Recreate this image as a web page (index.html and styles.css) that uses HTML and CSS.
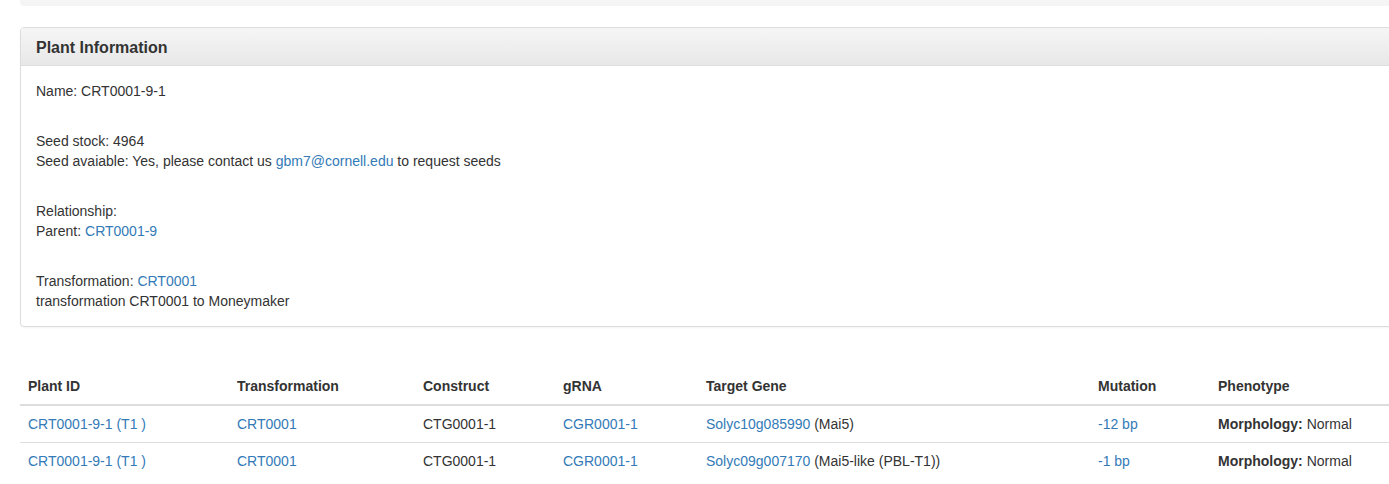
FILE: index.html
```html
<!DOCTYPE html>
<html lang="en">
  <head>
    <meta charset="UTF-8" />
    <meta name="viewport" content="width=device-width, initial-scale=1.0" />
    <title>CRT0001-9-1</title>
    <link rel="stylesheet" href="styles.css">
  </head>
  <body>
    <div class="container">
      <div class="well"></div>

      <div class="panel">
        <div class="panel-heading">
          <h3 class="panel-title">Plant Information</h3>
        </div>
        <div class="panel-body">
          <p>Name: CRT0001-9-1</p>
          <p>
            Seed stock: 4964<br />
            Seed avaiable: Yes, please contact us <a href="#">gbm7@cornell.edu</a> to request seeds
          </p>
          <p>
            Relationship:<br />
            Parent: <a href="#">CRT0001-9</a>
          </p>
          <p>
            Transformation: <a href="#">CRT0001</a><br />
            transformation CRT0001 to Moneymaker
          </p>
        </div>
      </div>

      <table class="plants">
        <colgroup>
          <col class="c-id" />
          <col class="c-trans" />
          <col class="c-construct" />
          <col class="c-grna" />
          <col class="c-gene" />
          <col class="c-mut" />
          <col class="c-pheno" />
        </colgroup>
        <thead>
          <tr>
            <th>Plant ID</th>
            <th>Transformation</th>
            <th>Construct</th>
            <th>gRNA</th>
            <th>Target Gene</th>
            <th>Mutation</th>
            <th>Phenotype</th>
          </tr>
        </thead>
        <tbody>
          <tr>
            <td><a href="#">CRT0001-9-1 (T1 )</a></td>
            <td><a href="#">CRT0001</a></td>
            <td>CTG0001-1</td>
            <td><a href="#">CGR0001-1</a></td>
            <td><a href="#">Solyc10g085990</a> (Mai5)</td>
            <td><a href="#">-12 bp</a></td>
            <td><b>Morphology:</b> Normal</td>
          </tr>
          <tr>
            <td><a href="#">CRT0001-9-1 (T1 )</a></td>
            <td><a href="#">CRT0001</a></td>
            <td>CTG0001-1</td>
            <td><a href="#">CGR0001-1</a></td>
            <td><a href="#">Solyc09g007170</a> (Mai5-like (PBL-T1))</td>
            <td><a href="#">-1 bp</a></td>
            <td><b>Morphology:</b> Normal</td>
          </tr>
        </tbody>
      </table>
    </div>
  </body>
</html>
```

FILE: styles.css
```css
html,
body {
  overflow: hidden;
}
body {
  margin: 0;
  font-family: "Liberation Sans", Arial, sans-serif;
  font-size: 14px;
  line-height: 20px;
  color: #333;
  background-color: #fff;
}
a {
  color: #337ab7;
  text-decoration: none;
}
.container {
  width: 1420px;
  padding-left: 20px;
}
.well {
  height: 6px;
  background-color: #f5f5f5;
  border-radius: 0 0 0 4px;
  margin-bottom: 21px;
}
.panel {
  border: 1px solid #ddd;
  border-radius: 4px;
  box-shadow: 0 1px 2px rgba(0, 0, 0, 0.05);
  margin-bottom: 41px;
}
.panel-heading {
  padding: 11px 15px 9px;
  border-bottom: 1px solid #ddd;
  border-radius: 3px 3px 0 0;
  background-image: linear-gradient(to bottom, #f5f5f5 0%, #e8e8e8 100%);
}
.panel-title {
  margin: 0;
  font-size: 16px;
  line-height: 17px;
  font-weight: bold;
}
.panel-body {
  padding: 15px;
}
.panel-body p {
  margin: 0 0 30px;
}
.panel-body p:last-child {
  margin-bottom: 0;
}
.plants {
  width: 1400px;
  border-collapse: collapse;
  table-layout: fixed;
}
.c-id {
  width: 209px;
}
.c-trans {
  width: 186px;
}
.c-construct {
  width: 140px;
}
.c-grna {
  width: 143px;
}
.c-gene {
  width: 392px;
}
.c-mut {
  width: 120px;
}
.plants th,
.plants td {
  padding: 8px;
  text-align: left;
  vertical-align: top;
  white-space: nowrap;
}
.plants th {
  border-bottom: 2px solid #ddd;
}
.plants td {
  border-top: 1px solid #ddd;
}
.plants tbody tr:first-child td {
  border-top: none;
}
```
